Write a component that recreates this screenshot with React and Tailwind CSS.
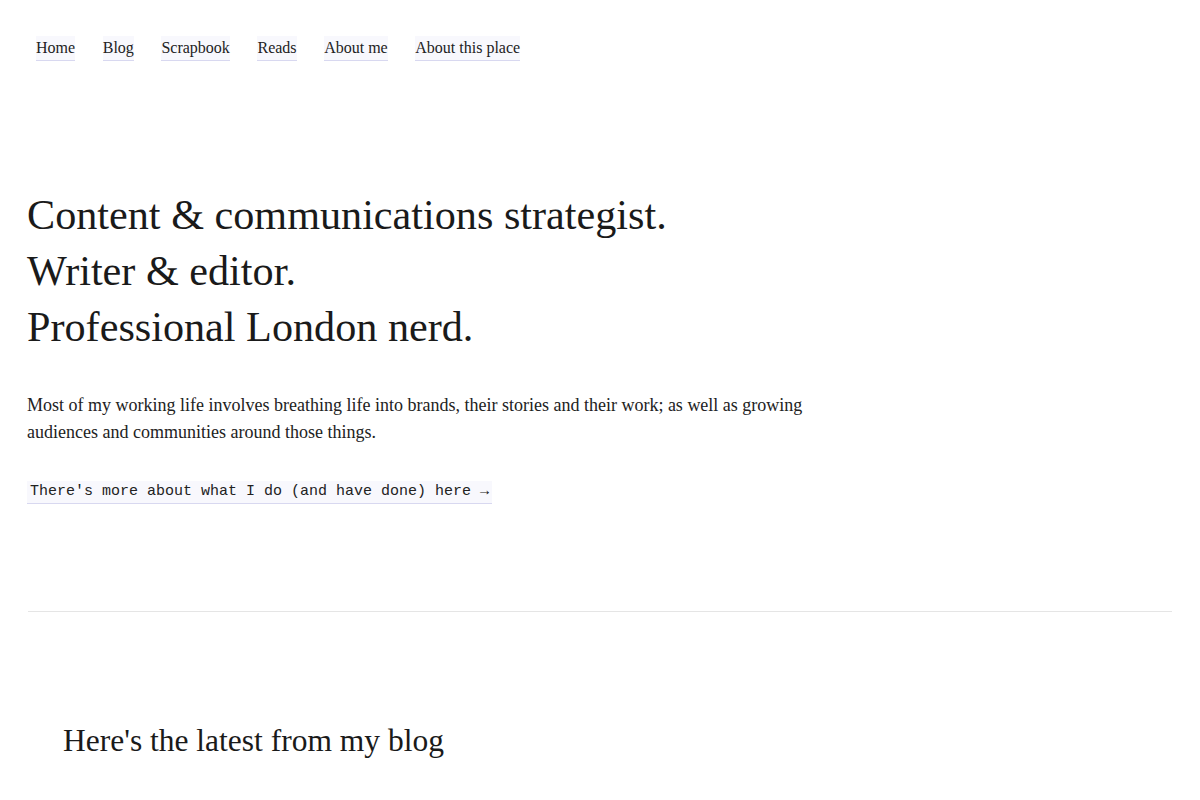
export default function App() {
  const links = ["Home", "Blog", "Scrapbook", "Reads", "About me", "About this place"];
  return (
    <div className="min-h-screen bg-white text-[#1a1a1a]" style={{ fontFamily: '"Liberation Serif", serif' }}>
      <nav className="flex gap-[27.6px] pl-[36px] pt-[36px] text-[16px] leading-[24px]">
        {links.map((l) => (
          <a key={l} href="#" className="bg-[#f8f8fd] border-b border-[#d8d8f0] text-[#222]">
            {l}
          </a>
        ))}
      </nav>
      <section className="px-[27px] pt-[126px]">
        <h1 className="text-[42.2px] leading-[56px] text-[#1a1a1a]">
          Content &amp; communications strategist.
          <br />
          Writer &amp; editor.
          <br />
          Professional London nerd.
        </h1>
        <p className="mt-[37px] max-w-[800px] text-[18px] leading-[27px] text-[#222]">
          Most of my working life involves breathing life into brands, their stories and their work; as well as growing audiences and communities around those things.
        </p>
        <div className="mt-[32px]">
          <a href="#" className="inline-block bg-[#f8f8fd] border-b border-[#d8d8f0] px-[3px] text-[15px] leading-[22px] text-[#222]" style={{ fontFamily: '"Liberation Mono", monospace' }}>
            There's more about what I do (and have done) here →
          </a>
        </div>
      </section>
      <hr className="mx-[28px] mt-[107px] border-t border-[#e5e5e5]" />
      <section className="px-[63px] pt-[107px]">
        <h2 className="text-[31.5px] leading-[44px] text-[#1a1a1a]">Here's the latest from my blog</h2>
      </section>
    </div>
  );
}
